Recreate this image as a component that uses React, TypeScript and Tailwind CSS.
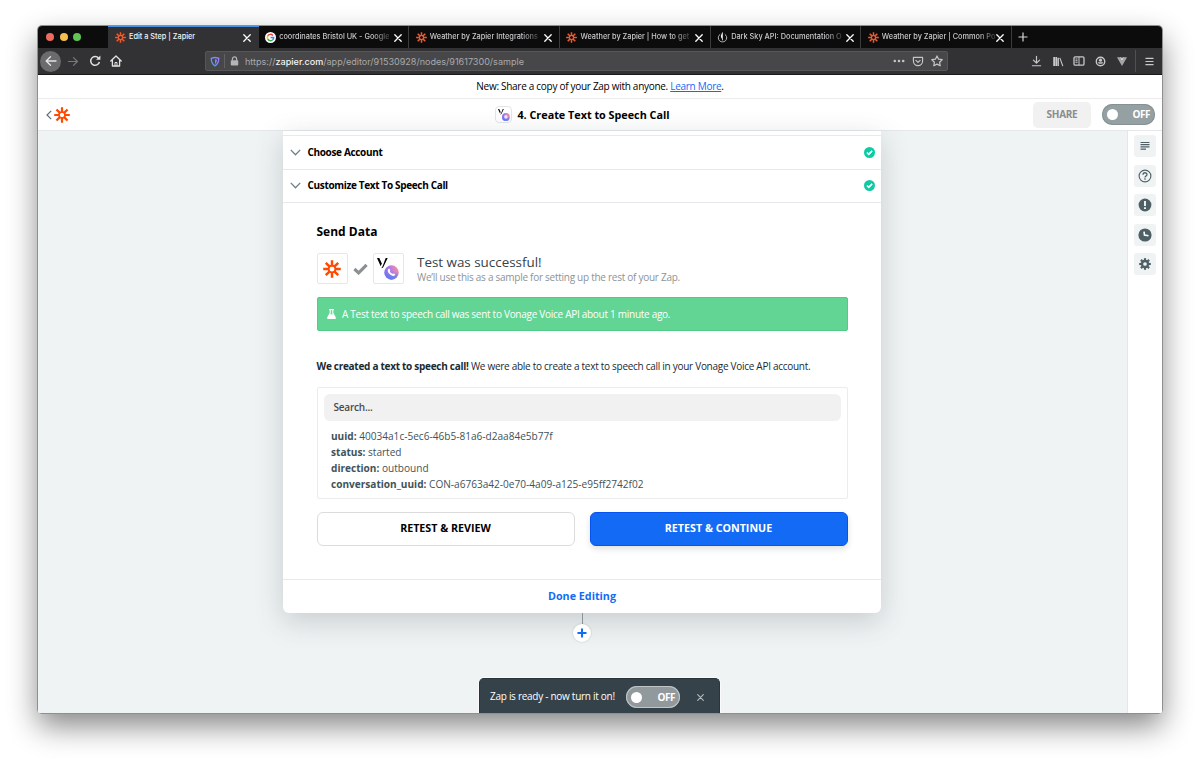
import React from "react";

const BROWSER_FONT = "font-[Inter,'Liberation_Sans',sans-serif]";
const APP_FONT = "font-['Open_Sans','Noto_Sans',sans-serif]";

function ZapierMark({ className, color = "#ff4a00" }: { className?: string; color?: string }) {
  return (
    <svg viewBox="0 0 24 24" className={className} fill="none" stroke={color} strokeWidth={3.3}>
      <path d="M12 0.300v8.200M12 15.500v8.200M0.300 12h8.200M15.500 12h8.200M3.700 3.700l5.900 5.900M14.400 14.400l5.900 5.900M20.300 3.700l-5.900 5.900M9.600 14.400l-5.900 5.900" />
      <circle cx="12" cy="12" r="4.600" strokeWidth="2.400" />
    </svg>
  );
}

function GoogleMark() {
  return (
    <svg viewBox="0 0 24 24" className="h-[11px] w-[11px] shrink-0">
      <circle cx="12" cy="12" r="12" fill="#fff" />
      <g fill="none" strokeWidth="3.2">
        <path d="M17.2 7.4A7 7 0 0 0 6 8.6" stroke="#ea4335" />
        <path d="M6 8.6A7 7 0 0 0 6 15.4" stroke="#fbbc05" />
        <path d="M6 15.4A7 7 0 0 0 16.4 17.4" stroke="#34a853" />
        <path d="M16.4 17.4A7 7 0 0 0 19 12.2H12" stroke="#4285f4" />
      </g>
    </svg>
  );
}

function DarkSkyMark() {
  return (
    <svg viewBox="0 0 24 24" className="h-[11px] w-[11px] shrink-0" fill="none" stroke="#c9c9c9" strokeWidth="2">
      <path d="M7 5C3 8 2 12 3.500 16c1.500 3.500 4.500 5.500 8.500 5.500s7-2 8.500-5.500C22 12 21 8 17 5" />
      <path d="M12 0.500c-3 5-4.500 8-3 11.500 1 2 3 3 3 9z" fill="#ededed" stroke="none" />
      <path d="M12 1v17" />
    </svg>
  );
}

function VonageMark({ className, id, receiver }: { className?: string; id: string; receiver?: boolean }) {
  return (
    <svg viewBox="0 0 22 22" className={className}>
      <defs>
        <linearGradient id={id} x1="0" y1="0.700" x2="1" y2="0.300">
          <stop offset="0" stopColor="#7b6cf5" />
          <stop offset="0.500" stopColor="#b27be8" />
          <stop offset="1" stopColor="#f98f9a" />
        </linearGradient>
        <linearGradient id={id + "b"} x1="0" y1="0" x2="0" y2="1">
          <stop offset="0.450" stopColor="#4f7df8" stopOpacity="0" />
          <stop offset="1" stopColor="#4f7df8" stopOpacity="0.900" />
        </linearGradient>
      </defs>
      <path d="M0 0h2.300l2.500 5.400-1.100 2.800z" fill="#000" />
      <path d="M8.700 0h2L6.500 8.800C6 9.900 5.400 10.200 4.200 10.200 6 8.500 7 4 8.700 0z" fill="#000" />
      <circle cx="14.500" cy="14.500" r="7.200" fill={`url(#${id})`} />
      <circle cx="14.500" cy="14.500" r="7.200" fill={`url(#${id}b)`} />
      {receiver ? (
        <path d="M11.200 11.200c.9-.8 1.500-.5 1.900.5.400.9-.5 1.200 0 2 .6 1 1.200 1.500 2.100 2 .8.400 1.100-.5 1.900-.1 1.100.6 1.300 1.200.5 2-1.200 1-3.500 0-5-1.500s-2.500-3.700-1.400-4.900z" fill="#fff" />
      ) : (
        <circle cx="14.500" cy="14.500" r="3.300" fill="#e9e6ff" />
      )}
    </svg>
  );
}

function Close({ className }: { className?: string }) {
  return (
    <svg viewBox="0 0 8 8" className={className} stroke="currentColor" strokeWidth="1.300" strokeLinecap="round">
      <path d="M.8.8l6.400 6.400M7.200.8L.8 7.200" />
    </svg>
  );
}

const tabs = [
  { icon: "zap", title: "Edit a Step | Zapier", active: true },
  { icon: "google", title: "coordinates Bristol UK - Google" },
  { icon: "zap", title: "Weather by Zapier Integrations" },
  { icon: "zap", title: "Weather by Zapier | How to get" },
  { icon: "dark", title: "Dark Sky API: Documentation O" },
  { icon: "zap", title: "Weather by Zapier | Common Po" },
];

function TabBar() {
  return (
    <div className="flex h-[22px] shrink-0 bg-[#0c0c0d]">
      <div className="flex w-[70px] items-center gap-[5.500px] pl-[8px]">
        <i className="h-[8px] w-[8px] rounded-full bg-[#ed6a5e]" />
        <i className="h-[8px] w-[8px] rounded-full bg-[#f5bf4f]" />
        <i className="h-[8px] w-[8px] rounded-full bg-[#61c554]" />
      </div>
      {tabs.map((t, i) => (
        <div
          key={i}
          className={
            "flex w-[150.670px] items-center " +
            (t.active
              ? "border-t border-[#4a90e2] bg-[#323234] pr-[8px] pl-[7px] text-[#f4f4f4]"
              : "border-r border-[#3c3c3e] pt-px pr-[6.500px] pl-[6.500px] text-[#c9c9cb]")
          }
        >
          {t.icon === "zap" && <ZapierMark className="h-[11px] w-[11px] shrink-0" color="#f1592a" />}
          {t.icon === "google" && <GoogleMark />}
          {t.icon === "dark" && <DarkSkyMark />}
          <span
            className={
              "ml-[3px] whitespace-nowrap text-[7.330px] font-medium " +
              (t.active ? "" : "[mask-image:linear-gradient(90deg,#000_85%,rgba(0,0,0,0.250))]")
            }
          >
            {t.title}
          </span>
          <Close className="ml-auto h-[8px] w-[8px] shrink-0 text-white" />
        </div>
      ))}
      <svg viewBox="0 0 10 10" className="mt-[6px] ml-[6px] h-[10px] w-[10px]" stroke="#d8d8d8" strokeWidth="1.200">
        <path d="M5 .5v9M.5 5h9" />
      </svg>
    </div>
  );
}

function Toolbar() {
  return (
    <div className="flex h-[27px] shrink-0 items-center border-b border-[#18181a] bg-[#323234]">
      <div className="flex w-[167px] items-center pl-[2px] text-[#e2e2e3]">
        <div className="flex h-[21px] w-[21px] items-center justify-center rounded-full bg-[#6b6b6d]">
          <svg viewBox="0 0 12 12" className="h-[12px] w-[12px]" fill="none" stroke="currentColor" strokeWidth="1.400" strokeLinecap="round" strokeLinejoin="round">
            <path d="M11 6H1.200M5.500 1.700L1.200 6l4.300 4.300" />
          </svg>
        </div>
        <svg viewBox="0 0 12 12" className="ml-[6px] h-[11px] w-[12px] text-[#78787a]" fill="none" stroke="currentColor" strokeWidth="1.300" strokeLinecap="round" strokeLinejoin="round">
          <path d="M1 6h9.800M6.500 1.700L10.800 6l-4.300 4.300" />
        </svg>
        <svg viewBox="0 0 12 12" className="ml-[10px] h-[12px] w-[12px]" fill="none" stroke="currentColor" strokeWidth="1.500">
          <path d="M9.600 3.200A4.400 4.400 0 1 0 10.400 7" />
          <path d="M7 4.700h4.400V.5z" fill="currentColor" stroke="none" />
        </svg>
        <svg viewBox="0 0 12 12" className="ml-[9px] h-[12px] w-[12px]" fill="none" stroke="currentColor" strokeWidth="1.300" strokeLinejoin="round" strokeLinecap="round">
          <path d="M.8 6L6 1l5.200 5M2.400 5v6h7.200V5" />
          <path d="M5 11V7.500h2V11" strokeWidth="1" />
        </svg>
      </div>
      <div className="flex h-[20px] w-[743px] items-center rounded-[2px] border border-[#565658] bg-[#474749] pl-[4px] pr-[4px]">
        <svg viewBox="0 0 12 12" className="h-[11px] w-[10px]" fill="none">
          <defs>
            <linearGradient id="shield" x1="0" y1="1" x2="1" y2="0">
              <stop offset="0" stopColor="#35a6ff" />
              <stop offset="1" stopColor="#b07bff" />
            </linearGradient>
          </defs>
          <path d="M6 1L1.500 2.200C1.500 7 3 9.700 6 11.200 9 9.700 10.500 7 10.500 2.200z" stroke="url(#shield)" strokeWidth="1.500" />
          <path d="M6 3.200v5.700c1.600-1.200 2.200-2.900 2.300-5.100z" fill="url(#shield)" />
        </svg>
        <i className="ml-[4px] h-[14px] w-px bg-[#626264]" />
        <svg viewBox="0 0 10 12" className="ml-[5px] h-[10px] w-[9px]" fill="#b5b5b6">
          <rect x=".5" y="5" width="9" height="6.500" rx="1" />
          <path d="M2.500 5.500V3.600a2.500 2.500 0 0 1 5 0v1.900" fill="none" stroke="#b5b5b6" strokeWidth="1.500" />
        </svg>
        <span className="ml-[6px] whitespace-nowrap pt-px text-[9.050px] text-[#a9a9ab]">
          https://<span className="font-medium text-[#f5f5f6]">zapier.com</span>/app/editor/91530928/nodes/91617300/sample
        </span>
        <svg viewBox="0 0 12 4" className="ml-auto h-[4px] w-[12px]" fill="#c4c4c5">
          <circle cx="1.800" cy="2" r="1.300" />
          <circle cx="6" cy="2" r="1.300" />
          <circle cx="10.200" cy="2" r="1.300" />
        </svg>
        <svg viewBox="0 0 12 12" className="ml-[7px] h-[11px] w-[12px]" fill="none" stroke="#c4c4c5" strokeWidth="1.300" strokeLinecap="round" strokeLinejoin="round">
          <path d="M1 1.500h10V5.500a5 5 0 0 1-10 0zM3.700 4.700L6 6.900l2.300-2.200" />
        </svg>
        <svg viewBox="0 0 12 12" className="ml-[7px] h-[12px] w-[12px]" fill="none" stroke="#c4c4c5" strokeWidth="1.200" strokeLinejoin="round">
          <path d="M6 .9l1.600 3.300 3.600.5-2.600 2.500.6 3.600L6 9.100l-3.200 1.700.6-3.600L.8 4.700l3.600-.5z" />
        </svg>
      </div>
      <div className="ml-auto flex items-center text-[#c8c8c9]">
        <svg viewBox="0 0 12 12" className="h-[12px] w-[11px]" fill="none" stroke="currentColor" strokeWidth="1.300" strokeLinecap="round" strokeLinejoin="round">
          <path d="M6 .8v7.400M2.600 5L6 8.400 9.400 5M1.500 11.200h9" />
        </svg>
        <svg viewBox="0 0 12 12" className="ml-[10px] h-[11px] w-[12px]" fill="currentColor">
          <path d="M.8 1h2v10h-2zM3.200 1h1.700v10H3.200zM5.300 2H7v9H5.300z" />
          <path d="M8 2l3.300 9" stroke="currentColor" strokeWidth="1.200" />
        </svg>
        <svg viewBox="0 0 12 12" className="ml-[9px] h-[12px] w-[12px]" fill="none" stroke="currentColor" strokeWidth="1.300">
          <rect x="1" y="1.800" width="10" height="8.400" rx="1.300" />
          <path d="M6 2v8M2.500 4h2M2.500 5.700h2M2.500 7.300h2" strokeWidth="1" />
        </svg>
        <svg viewBox="0 0 12 12" className="ml-[10px] h-[11px] w-[11px]" fill="none" stroke="currentColor" strokeWidth="1.500">
          <circle cx="6" cy="6" r="4.600" />
          <circle cx="6" cy="4.500" r="1.700" fill="currentColor" stroke="none" />
          <path d="M3 6.800c.6 2.200 5.400 2.200 6 0z" fill="currentColor" stroke="none" />
        </svg>
        <svg viewBox="0 0 12 12" className="ml-[10px] h-[11px] w-[12px]">
          <path d="M.5 1.300h3L6 5.600l2.500-4.300h3L6 11z" fill="#a5a5a7" />
          <path d="M3.500 1.300h1.700L6 2.700l.8-1.400h1.700L6 5.600z" fill="#dadadb" />
        </svg>
        <i className="ml-[7px] h-[22px] w-px bg-[#505052]" />
        <svg viewBox="0 0 10 10" className="mr-[8px] ml-[9px] h-[9px] w-[9px]" stroke="currentColor" strokeWidth="1.300" strokeLinecap="round">
          <path d="M1 1.500h8M1 5h8M1 8.500h8" />
        </svg>
      </div>
    </div>
  );
}

function Toggle({ bordered }: { bordered?: boolean }) {
  return (
    <div
      className={
        "flex items-center justify-between rounded-full pr-[5px] pl-[5px] " +
        (bordered
          ? "mt-[2px] h-[22px] w-[54px] bg-[#92999c] shadow-[inset_0_0_0_1px_#c0c5c7]"
          : "h-[21px] w-[53px] bg-[#95a0a3] shadow-[inset_0_0_0_1px_#859195]")
      }
    >
      <i className="h-[11px] w-[11px] rounded-full bg-white" />
      <span className="text-[10px] font-bold tracking-[-0.450px] text-white">OFF</span>
    </div>
  );
}

function StepRow({ title }: { title: string }) {
  return (
    <div className="flex h-[33.500px] items-center border-t border-[#e6eaec] pr-[6px] pl-[7px]">
      <svg viewBox="0 0 12 8" className="h-[7px] w-[11px]" fill="none" stroke="#6f7f86" strokeWidth="1.500">
        <path d="M.6 1L6 6.600 11.400 1" />
      </svg>
      <span className="ml-[6.500px] text-[10px] font-bold tracking-[-0.340px] text-black">{title}</span>
      <svg viewBox="0 0 12 12" className="ml-auto h-[11px] w-[11px]">
        <circle cx="6" cy="6" r="6" fill="#0fcba4" />
        <path d="M3.200 6l2 2 3.700-3.800" fill="none" stroke="#fff" strokeWidth="1.700" />
      </svg>
    </div>
  );
}

const fields = [
  ["uuid:", "40034a1c-5ec6-46b5-81a6-d2aa84e5b77f"],
  ["status:", "started"],
  ["direction:", "outbound"],
  ["conversation_uuid:", "CON-a6763a42-0e70-4a09-a125-e95ff2742f02"],
];

function Card() {
  return (
    <div className="flex w-[598px] flex-col rounded-b-[6px] bg-white shadow-[0_8px_28px_rgba(60,70,75,0.220)]">
      <div className="h-[4px]" />
      <StepRow title="Choose Account" />
      <StepRow title="Customize Text To Speech Call" />
      <div className="flex h-[378px] flex-col border-t border-b border-[#e6eaec] px-[33.500px]">
        <h2 className="mt-[21px] text-[12px] leading-[16px] font-bold text-black">Send Data</h2>
        <div className="mt-[13px] flex h-[31px] items-center">
          <div className="flex h-[31px] w-[31px] items-center justify-center rounded-[2px] border border-[#e3e8eb]">
            <ZapierMark className="h-[18px] w-[18px]" />
          </div>
          <svg viewBox="0 0 16 12" className="mx-[5px] h-[12px] w-[15px]">
            <path d="M1.500 6L6 10.200 14.500 1.600" fill="none" stroke="#8b9193" strokeWidth="3.300" />
          </svg>
          <div className="flex h-[31px] w-[31px] items-center justify-center rounded-[2px] border border-[#e3e8eb]">
            <VonageMark className="h-[22px] w-[22px]" id="vonage-large" receiver />
          </div>
          <div className="ml-[13.500px] flex flex-col">
            <span className="text-[13.400px] leading-[17px] text-[#354249]">Test was successful!</span>
            <span className="text-[10px] leading-[12px] tracking-[-0.270px] text-[#8b9498]">We’ll use this as a sample for setting up the rest of your Zap.</span>
          </div>
        </div>
        <div className="mt-[13px] flex h-[34px] shrink-0 items-center rounded-[2px] border border-[#51cb85] bg-[#62d594] pl-[9.500px] text-white">
          <svg viewBox="0 0 10 11" className="h-[10px] w-[9px]" fill="currentColor">
            <path d="M2.300 0h5.400v1.200H7v3L9.800 9.400c.4.800 0 1.600-.9 1.600H1.100C.2 11-.2 10.200.2 9.400L3 4.200v-3h-.7z" />
            <path d="M4.200 1.200h1.600v3.400l.7 1.200H3.500l.7-1.200z" fill="#62d594" />
          </svg>
          <span className="ml-[6px] text-[10px] font-medium tracking-[-0.280px]">A Test text to speech call was sent to Vonage Voice API about 1 minute ago.</span>
        </div>
        <p className="mt-[27px] text-[10px] leading-[16px] tracking-[-0.280px] whitespace-nowrap text-[#1b2a31]">
          <b>We created a text to speech call!</b> We were able to create a text to speech call in your Vonage Voice API account.
        </p>
        <div className="mt-[13px] flex h-[112px] shrink-0 flex-col rounded-[2px] border border-[#ececec] px-[6px] pt-[6px]">
          <div className="flex h-[27px] items-center rounded-[6px] bg-[#f1f1f1] pl-[10px] text-[10px] font-semibold tracking-[-0.200px] text-[#4a4a4a]">Search...</div>
          <div className="mt-[7px] flex flex-col pl-[7.500px]">
            {fields.map(([k, v]) => (
              <div key={k} className="h-[16px] text-[10.080px] leading-[16px] whitespace-nowrap text-[#42525a]">
                <b>{k}</b> {v}
              </div>
            ))}
          </div>
        </div>
        <div className="mt-[13px] flex justify-between">
          <button className="h-[34px] w-[258px] rounded-[6px] border border-[#dcdcdc] bg-white pb-[2px] text-[10.700px] font-bold text-black">RETEST &amp; REVIEW</button>
          <button className="h-[34px] w-[258px] rounded-[6px] border border-[#0554f0] bg-[#136bf5] pb-[2px] text-[10.700px] font-bold text-white shadow-[0_3px_6px_rgba(0,0,0,0.120)]">RETEST &amp; CONTINUE</button>
        </div>
      </div>
      <div className="flex h-[33px] items-center justify-center text-[10.750px] font-bold text-[#136bf5]">Done Editing</div>
    </div>
  );
}

function SideIcon({ children }: { children: React.ReactNode }) {
  return (
    <div className="flex h-[22px] w-[22px] items-center justify-center rounded-[3px] bg-[#eff3f4]">
      <svg viewBox="0 0 14 14" className="h-[14px] w-[14px]" fill="none" stroke="#4f5f66">
        {children}
      </svg>
    </div>
  );
}

function Sidebar() {
  return (
    <div className="flex w-[35px] shrink-0 flex-col items-center gap-[7.500px] border-l border-[#e2e7e9] bg-white pt-[4px]">
      <SideIcon>
        <path d="M2.500 3.500h9M2.500 5.700h9M2.500 7.900h9M2.500 10.100h5.500" strokeWidth="1.200" />
      </SideIcon>
      <SideIcon>
        <circle cx="7" cy="7" r="5.900" strokeWidth="1.100" />
        <path d="M5 5.700c0-2.600 4-2.500 4-.2C9 7 7 6.900 7 8.500M7 9.300v1.400" strokeWidth="1.300" />
      </SideIcon>
      <SideIcon>
        <circle cx="7" cy="7" r="6.400" fill="#4f5f66" stroke="none" />
        <path d="M7 3v5M7 9.300V11" stroke="#fff" strokeWidth="1.800" />
      </SideIcon>
      <SideIcon>
        <circle cx="7" cy="7" r="6.600" fill="#4f5f66" stroke="none" />
        <path d="M6 3.700L6.500 7l4 .8" stroke="#fff" strokeWidth="1.600" />
      </SideIcon>
      <SideIcon>
        <circle cx="7" cy="7" r="3" strokeWidth="2.300" />
        {[0, 45, 90, 135, 180, 225, 270, 315].map((a) => (
          <path key={a} d="M7 3.500V1.200" strokeWidth="2.200" transform={`rotate(${a} 7 7)`} />
        ))}
      </SideIcon>
    </div>
  );
}

export default function App() {
  return (
    <div className="h-[763px] w-[1200px] overflow-hidden bg-white pt-[26px] pl-[38px]">
      <div className="flex h-[687px] w-[1124px] flex-col rounded-[4px] shadow-[0_0_0_1px_#8f8f8f,0_13px_30px_rgba(0,0,0,0.480)]">
        <div className={"flex flex-col overflow-hidden rounded-t-[4px] " + BROWSER_FONT}>
          <TabBar />
          <Toolbar />
        </div>
        <div className={"relative flex min-h-0 flex-1 flex-col overflow-hidden rounded-b-[2px] bg-white " + APP_FONT}>
          <div className="flex h-[24px] shrink-0 items-center justify-center border-b border-[#ebebeb] text-[10px] tracking-[-0.290px] text-black">
            <span>
              New: Share a copy of your Zap with anyone. <a className="text-[#136bf5] underline">Learn More</a>.
            </span>
          </div>
          <div className="flex h-[32px] shrink-0 items-center border-b border-[#e4e8ea]">
            <div className="flex w-[372px] items-center pl-[8px]">
              <svg viewBox="0 0 6 10" className="h-[10px] w-[6px]" fill="none" stroke="#5f6f76" strokeWidth="1.200">
                <path d="M5.200.8L1 5l4.200 4.200" />
              </svg>
              <ZapierMark className="ml-[1.500px] h-[16px] w-[16px]" />
            </div>
            <div className="flex flex-1 items-center justify-center">
              <div className="flex h-[17px] w-[17px] items-center justify-center rounded-[4px] border border-[#e1e5e7]">
                <VonageMark className="h-[12px] w-[12px]" id="vonage-small" />
              </div>
              <h1 className="ml-[5px] pt-px text-[10.800px] font-bold text-black">4. Create Text to Speech Call</h1>
            </div>
            <div className="flex w-[407px] items-center justify-end pr-[7px]">
              <button className="mr-[11px] h-[26px] w-[58px] rounded-[5px] bg-[#f1f1f1] text-[10px] font-bold tracking-[-0.300px] text-[#8c8c8c]">SHARE</button>
              <Toggle />
            </div>
          </div>
          <div className="flex min-h-0 flex-1">
            <div className="flex flex-1 flex-col items-center bg-[#eff3f4] pr-px">
              <Card />
              <i className="relative h-[11px] w-px bg-[#8b9499]" />
              <div className="relative flex h-[18px] w-[18px] items-center justify-center rounded-full bg-white shadow-[0_0_2px_rgba(0,0,0,0.200)]">
                <svg viewBox="0 0 10 10" className="h-[10px] w-[10px]" stroke="#136bf5" strokeWidth="2.100">
                  <path d="M5 .5v9M.5 5h9" />
                </svg>
              </div>
            </div>
            <Sidebar />
          </div>
          <div className="absolute bottom-0 left-[441px] flex h-[35px] w-[241px] items-center rounded-t-[5px] border border-b-0 border-[#29353b] bg-[#354249] pl-[10px] shadow-[0_0_0_1px_#fafafa]">
            <span className="w-[136px] whitespace-nowrap text-[10px] font-medium tracking-[-0.280px] text-white">Zap is ready - now turn it on!</span>
            <Toggle bordered />
            <Close className="mt-[3px] ml-[17px] h-[7px] w-[7px] text-[#b5bbbe]" />
          </div>
        </div>
      </div>
    </div>
  );
}
